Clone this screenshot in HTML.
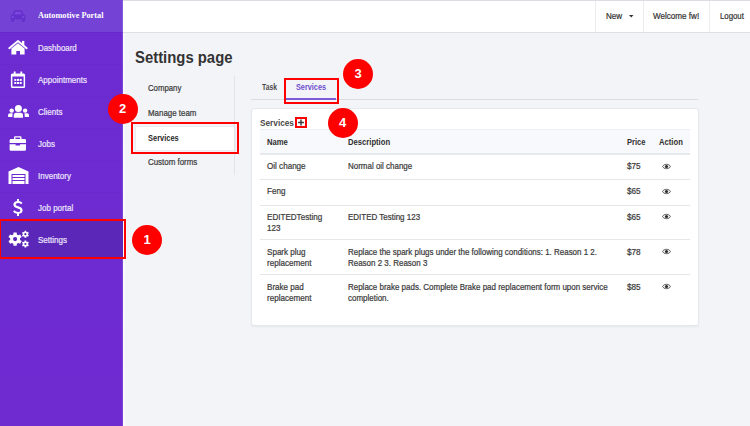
<!DOCTYPE html>
<html><head><meta charset="utf-8">
<style>
*{box-sizing:border-box;margin:0;padding:0}
html,body{width:750px;height:426px;overflow:hidden}
body{background:#f3f4f8;font-family:"Liberation Sans",sans-serif;color:#363636;position:relative}
.abs{position:absolute}
.tx{position:absolute;white-space:nowrap;transform-origin:0 0}
.red{position:absolute;border:2px solid #f00}
.circ{position:absolute;width:30px;height:30px;border-radius:50%;background:#fe0000}
.circ span{position:absolute;left:0;width:30px;top:8px;text-align:center;font-weight:bold;font-size:13px;line-height:14px;color:#fff}
.hl{position:absolute;left:260px;width:430px;height:1px;background:#e6e7eb}
</style></head><body>
<div class="abs" style="left:0;top:0;width:123px;height:426px;background:linear-gradient(#6b2cd1,#6f2ad0)"></div>
<div class="abs" style="left:0;top:0;width:123px;height:32px;background:#7443d6"></div>
<div class="abs" style="left:123px;top:32px;width:2px;height:394px;background:#f9f9fc"></div>
<div class="abs" style="left:0;top:32px;width:123px;height:1px;background:rgba(60,0,120,0.08)"></div>
<div class="abs" style="left:122px;top:0;width:1px;height:426px;background:rgba(255,255,255,0.12)"></div>
<svg class="abs" style="left:10px;top:10px" width="16" height="12" viewBox="0 0 16 12"><path d="M0.4 6.8 Q0.4 4.9 2.2 4.5 L3.8 1.2 Q4.3 0.3 5.3 0.3 H10.7 Q11.7 0.3 12.2 1.2 L13.8 4.5 Q15.6 4.9 15.6 6.8 V9.6 H0.4 Z" fill="#6431cc"/><rect x="1.2" y="9" width="2.8" height="3" rx="0.6" fill="#6431cc"/><rect x="12" y="9" width="2.8" height="3" rx="0.6" fill="#6431cc"/><path d="M4.3 4.3 L5.4 1.9 H10.6 L11.7 4.3 Z" fill="#7e48de"/><circle cx="2.7" cy="7.1" r="1.1" fill="#7e48de"/><circle cx="13.3" cy="7.1" r="1.1" fill="#7e48de"/></svg>
<div class="tx" style="left:38px;top:9.83px;font-size:8.8px;line-height:11.0px;font-weight:700;color:#fff;transform:scaleX(0.94);font-family:'Liberation Serif',serif;">Automotive Portal</div>
<div class="abs" style="left:0;top:64px;width:123px;height:1px;background:rgba(0,0,0,0.02)"></div>
<div class="abs" style="left:0;top:96px;width:123px;height:1px;background:rgba(0,0,0,0.02)"></div>
<div class="abs" style="left:0;top:128px;width:123px;height:1px;background:rgba(0,0,0,0.02)"></div>
<div class="abs" style="left:0;top:160px;width:123px;height:1px;background:rgba(0,0,0,0.02)"></div>
<div class="abs" style="left:0;top:192px;width:123px;height:1px;background:rgba(0,0,0,0.02)"></div>
<svg class="abs" style="left:8px;top:40px" width="20" height="15" viewBox="0 0 20 15"><path d="M1.3 8.2 L10 1.1 L18.7 8.2" fill="none" stroke="#fff" stroke-width="1.9" stroke-linecap="round" stroke-linejoin="round"/><rect x="14" y="0.9" width="2.3" height="4.6" fill="#fff"/><path d="M3.4 8.6 L10 3.3 L16.6 8.6 V14.6 H12 V11 H8.3 V14.6 H3.4 Z" fill="#fff"/></svg>
<div class="tx" style="left:38px;top:42.85px;font-size:8.8px;line-height:11.0px;font-weight:400;color:#ebe3fc;transform:scaleX(0.9);font-family:'Liberation Sans',sans-serif;-webkit-text-stroke:0.22px #ebe3fc;">Dashboard</div>
<svg class="abs" style="left:10px;top:71px" width="16" height="17" viewBox="0 0 16 17"><path d="M3.8 0.6 H5.6 V2.5 H10.4 V0.6 H12.2 V2.5 H13.6 Q15.1 2.5 15.1 4 V15.4 Q15.1 16.9 13.6 16.9 H2.4 Q0.9 16.9 0.9 15.4 V4 Q0.9 2.5 2.4 2.5 H3.8 Z M2.4 5.6 V15.4 H13.6 V5.6 Z" fill="#fff" fill-rule="evenodd"/><g fill="#fff"><rect x="4.3" y="7.9" width="2" height="2"/><rect x="7" y="7.9" width="2" height="2"/><rect x="9.7" y="7.9" width="2" height="2"/><rect x="4.3" y="11" width="2" height="2"/><rect x="7" y="11" width="2" height="2"/><rect x="9.7" y="11" width="2" height="2"/></g></svg>
<div class="tx" style="left:38px;top:74.75px;font-size:8.8px;line-height:11.0px;font-weight:400;color:#ebe3fc;transform:scaleX(0.91);font-family:'Liberation Sans',sans-serif;-webkit-text-stroke:0.22px #ebe3fc;">Appointments</div>
<svg class="abs" style="left:8px;top:104px" width="22" height="15" viewBox="0 0 22 15"><g fill="#fff"><circle cx="10.4" cy="4.5" r="3.5"/><circle cx="3.7" cy="6.6" r="2.2"/><circle cx="17.1" cy="6.6" r="2.2"/><path d="M5.8 13.8 V11.2 Q5.8 8.7 8.3 8.7 H12.5 Q15 8.7 15 11.2 V13.8 Z"/><path d="M0.1 13 V11.1 Q0.1 9.2 2 9.2 H4.7 Q4.3 10.4 4.4 13 Z"/><path d="M21 13 V11.1 Q21 9.2 19.1 9.2 H16.4 Q16.8 10.4 16.7 13 Z"/></g></svg>
<div class="tx" style="left:38px;top:106.65px;font-size:8.8px;line-height:11.0px;font-weight:400;color:#ebe3fc;transform:scaleX(0.91);font-family:'Liberation Sans',sans-serif;-webkit-text-stroke:0.22px #ebe3fc;">Clients</div>
<svg class="abs" style="left:9px;top:136px" width="18" height="15" viewBox="0 0 18 15"><path d="M6.2 0.2 H11.3 Q12.5 0.2 12.5 1.4 V3 H15.6 Q17 3 17 4.4 V7.1 H0.6 V4.4 Q0.6 3 2 3 H5 V1.4 Q5 0.2 6.2 0.2 Z M6.4 1.6 V3 H11.1 V1.6 Z" fill="#fff" fill-rule="evenodd"/><path d="M0.6 8.2 H6.6 V9.6 H11 V8.2 H17 V13.6 Q17 14.8 15.8 14.8 H1.8 Q0.6 14.8 0.6 13.6 Z" fill="#fff"/></svg>
<div class="tx" style="left:38px;top:138.65px;font-size:8.8px;line-height:11.0px;font-weight:400;color:#ebe3fc;transform:scaleX(0.91);font-family:'Liberation Sans',sans-serif;-webkit-text-stroke:0.22px #ebe3fc;">Jobs</div>
<svg class="abs" style="left:8px;top:167px" width="21" height="17" viewBox="0 0 21 17"><path d="M10.5 0 L20.5 4.5 V17 H17.5 V7 H3.5 V17 H0.5 V4.5 Z" fill="#fff"/><rect x="4.5" y="8" width="12" height="2" fill="#fff"/><rect x="4.5" y="11" width="12" height="2" fill="#fff"/><rect x="4.5" y="14" width="12" height="3" fill="#fff"/></svg>
<div class="tx" style="left:38px;top:170.65px;font-size:8.8px;line-height:11.0px;font-weight:400;color:#ebe3fc;transform:scaleX(0.91);font-family:'Liberation Sans',sans-serif;-webkit-text-stroke:0.22px #ebe3fc;">Inventory</div>
<svg class="abs" style="left:13.2px;top:199px" width="10" height="18" viewBox="0 0 10 18"><path d="M4 0 H6 V2 Q8.5 2.3 9.5 4 L8 5.2 Q7 3.9 5 3.9 Q2.6 3.9 2.6 5.4 Q2.6 6.6 5.2 7.2 Q9.6 8.2 9.6 11.3 Q9.6 14.3 6 14.8 V17 H4 V14.8 Q1.2 14.5 0 12.5 L1.6 11.3 Q2.7 12.9 5 12.9 Q7.4 12.9 7.4 11.4 Q7.4 10.1 4.6 9.4 Q0.4 8.5 0.4 5.6 Q0.4 2.6 4 2.1 Z" fill="#fff"/></svg>
<div class="tx" style="left:38px;top:202.65px;font-size:8.8px;line-height:11.0px;font-weight:400;color:#ebe3fc;transform:scaleX(0.91);font-family:'Liberation Sans',sans-serif;-webkit-text-stroke:0.22px #ebe3fc;">Job portal</div>
<div class="abs" style="left:0;top:221px;width:123px;height:36px;background:#5b27b9"></div>
<svg class="abs" style="left:0;top:225px" width="40" height="30" viewBox="0 0 40 30"><path fill="#fff" fill-rule="evenodd" d="M13.34 9.42 L13.52 7.38 L16.68 7.38 L16.86 9.42 L18.27 10.23 L20.13 9.38 L21.71 12.11 L20.03 13.29 L20.03 14.91 L21.71 16.09 L20.13 18.82 L18.27 17.97 L16.86 18.78 L16.68 20.82 L13.52 20.82 L13.34 18.78 L11.93 17.97 L10.07 18.82 L8.49 16.09 L10.17 14.91 L10.17 13.29 L8.49 12.11 L10.07 9.38 L11.93 10.23 Z M17.20 14.10 A2.1 2.1 0 1 0 13.00 14.10 A2.1 2.1 0 1 0 17.20 14.10 Z M24.48 6.77 L24.58 5.70 L26.22 5.70 L26.32 6.77 L27.05 7.19 L28.02 6.74 L28.85 8.16 L27.97 8.78 L27.97 9.62 L28.85 10.24 L28.02 11.66 L27.05 11.21 L26.32 11.63 L26.22 12.70 L24.58 12.70 L24.48 11.63 L23.75 11.21 L22.78 11.66 L21.95 10.24 L22.83 9.62 L22.83 8.78 L21.95 8.16 L22.78 6.74 L23.75 7.19 Z M26.50 9.20 A1.1 1.1 0 1 0 24.30 9.20 A1.1 1.1 0 1 0 26.50 9.20 Z M24.48 16.57 L24.58 15.50 L26.22 15.50 L26.32 16.57 L27.05 16.99 L28.02 16.54 L28.85 17.96 L27.97 18.58 L27.97 19.42 L28.85 20.04 L28.02 21.46 L27.05 21.01 L26.32 21.43 L26.22 22.50 L24.58 22.50 L24.48 21.43 L23.75 21.01 L22.78 21.46 L21.95 20.04 L22.83 19.42 L22.83 18.58 L21.95 17.96 L22.78 16.54 L23.75 16.99 Z M26.50 19.00 A1.1 1.1 0 1 0 24.30 19.00 A1.1 1.1 0 1 0 26.50 19.00 Z"/></svg>
<div class="tx" style="left:38px;top:234.65px;font-size:8.8px;line-height:11.0px;font-weight:400;color:#ebe3fc;transform:scaleX(0.91);font-family:'Liberation Sans',sans-serif;-webkit-text-stroke:0.22px #ebe3fc;">Settings</div>
<div class="red" style="left:0;top:219.3px;width:126px;height:40px;border-left-width:1.6px"></div>
<div class="abs" style="left:123px;top:0;width:627px;height:33px;background:#fff;border-top:1px solid #dcdde2;border-bottom:1px solid #dfe0e5"></div>
<div class="abs" style="left:595px;top:1px;width:1px;height:31px;background:#ececef"></div>
<div class="abs" style="left:643px;top:1px;width:1px;height:31px;background:#ececef"></div>
<div class="abs" style="left:709px;top:1px;width:1px;height:31px;background:#ececef"></div>
<div class="tx" style="left:605.5px;top:10.95px;font-size:8.8px;line-height:11.0px;font-weight:400;color:#333;transform:scaleX(0.915);font-family:'Liberation Sans',sans-serif;-webkit-text-stroke:0.22px #333;">New</div>
<svg class="abs" style="left:629.2px;top:15.2px" width="4.5" height="2.4" viewBox="0 0 4.5 2.4"><path d="M0 0 H4.5 L2.25 2.4 Z" fill="#333"/></svg>
<div class="tx" style="left:653px;top:10.95px;font-size:8.8px;line-height:11.0px;font-weight:400;color:#333;transform:scaleX(0.92);font-family:'Liberation Sans',sans-serif;-webkit-text-stroke:0.22px #333;">Welcome fw!</div>
<div class="tx" style="left:719.6px;top:10.95px;font-size:8.8px;line-height:11.0px;font-weight:400;color:#333;transform:scaleX(0.885);font-family:'Liberation Sans',sans-serif;-webkit-text-stroke:0.22px #333;">Logout</div>
<div class="tx" style="left:135.3px;top:47.10px;font-size:17.4px;line-height:21.75px;font-weight:700;color:#333;transform:scaleX(0.855);font-family:'Liberation Sans',sans-serif;">Settings page</div>
<div class="tx" style="left:147.7px;top:83.05px;font-size:8.8px;line-height:11.0px;font-weight:400;color:#3a3a3a;transform:scaleX(0.885);font-family:'Liberation Sans',sans-serif;-webkit-text-stroke:0.22px #3a3a3a;">Company</div>
<div class="tx" style="left:147.7px;top:107.75px;font-size:8.8px;line-height:11.0px;font-weight:400;color:#3a3a3a;transform:scaleX(0.9);font-family:'Liberation Sans',sans-serif;-webkit-text-stroke:0.22px #3a3a3a;">Manage team</div>
<div class="abs" style="left:135px;top:125.5px;width:101px;height:25px;background:#fff;border:1px solid #ececf0"></div>
<div class="tx" style="left:147.7px;top:132.65px;font-size:8.8px;line-height:11.0px;font-weight:700;color:#2a2a2a;transform:scaleX(0.85);font-family:'Liberation Sans',sans-serif;">Services</div>
<div class="tx" style="left:147.7px;top:157.35px;font-size:8.8px;line-height:11.0px;font-weight:400;color:#3a3a3a;transform:scaleX(0.9);font-family:'Liberation Sans',sans-serif;-webkit-text-stroke:0.22px #3a3a3a;">Custom forms</div>
<div class="abs" style="left:234px;top:76px;width:1px;height:99px;background:#e3e4e8"></div>
<div class="red" style="left:131px;top:122px;width:108px;height:32px"></div>
<div class="abs" style="left:251px;top:98.5px;width:447px;height:1.2px;background:#dcdde1"></div>
<div class="tx" style="left:261.5px;top:81.75px;font-size:8.8px;line-height:11.0px;font-weight:700;color:#4a4a4a;transform:scaleX(0.77);font-family:'Liberation Sans',sans-serif;">Task</div>
<div class="tx" style="left:295.8px;top:81.75px;font-size:8.8px;line-height:11.0px;font-weight:700;color:#6f50cc;transform:scaleX(0.83);font-family:'Liberation Sans',sans-serif;">Services</div>
<div class="abs" style="left:286px;top:98px;width:50px;height:2px;background:#7b5bd6"></div>
<div class="red" style="left:284px;top:78px;width:55px;height:26px"></div>
<div class="abs" style="left:251px;top:108px;width:447.5px;height:218px;background:#fff;border:1px solid #e6e8ed;border-radius:3px;box-shadow:0 1px 2px rgba(0,0,0,0.06)"></div>
<div class="tx" style="left:260.2px;top:117.07px;font-size:9.4px;line-height:11.75px;font-weight:700;color:#4a4a4a;transform:scaleX(0.88);font-family:'Liberation Sans',sans-serif;">Services</div>
<svg class="abs" style="left:295px;top:117px" width="12" height="11" viewBox="0 0 12 11"><rect x="1" y="1" width="10" height="9" fill="none" stroke="#f00" stroke-width="2"/><path d="M6 2.6 V8.4 M3.1 5.5 H8.9" stroke="#3a3a3a" stroke-width="1.45"/></svg>
<div class="abs" style="left:260px;top:129px;width:430px;height:25.5px;background:#f8f9fc;border-top:1px solid #eceef2;border-bottom:2px solid #e6e8ec"></div>
<div class="tx" style="left:266.5px;top:136.65px;font-size:8.8px;line-height:11.0px;font-weight:700;color:#2f2f2f;transform:scaleX(0.87);font-family:'Liberation Sans',sans-serif;">Name</div>
<div class="tx" style="left:348.2px;top:136.65px;font-size:8.8px;line-height:11.0px;font-weight:700;color:#2f2f2f;transform:scaleX(0.87);font-family:'Liberation Sans',sans-serif;">Description</div>
<div class="tx" style="left:627.2px;top:136.65px;font-size:8.8px;line-height:11.0px;font-weight:700;color:#2f2f2f;transform:scaleX(0.855);font-family:'Liberation Sans',sans-serif;">Price</div>
<div class="tx" style="left:659.2px;top:136.65px;font-size:8.8px;line-height:11.0px;font-weight:700;color:#2f2f2f;transform:scaleX(0.87);font-family:'Liberation Sans',sans-serif;">Action</div>
<div class="hl" style="top:179px"></div>
<div class="hl" style="top:204.5px"></div>
<div class="hl" style="top:239.3px"></div>
<div class="hl" style="top:274.2px"></div>
<div class="tx" style="left:266.5px;top:161.25px;font-size:8.8px;line-height:11.2px;font-weight:400;color:#3a3a3a;transform:scaleX(0.918);font-family:'Liberation Sans',sans-serif;-webkit-text-stroke:0.22px #3a3a3a;">Oil change</div>
<div class="tx" style="left:348.2px;top:161.25px;font-size:8.8px;line-height:11.2px;font-weight:400;color:#3a3a3a;transform:scaleX(0.906);font-family:'Liberation Sans',sans-serif;-webkit-text-stroke:0.22px #3a3a3a;">Normal oil change</div>
<div class="tx" style="left:627.2px;top:161.25px;font-size:8.8px;line-height:11.2px;font-weight:400;color:#3a3a3a;transform:scaleX(0.93);font-family:'Liberation Sans',sans-serif;-webkit-text-stroke:0.22px #3a3a3a;">$75</div>
<div class="tx" style="left:266.5px;top:186.25px;font-size:8.8px;line-height:11.2px;font-weight:400;color:#3a3a3a;transform:scaleX(0.918);font-family:'Liberation Sans',sans-serif;-webkit-text-stroke:0.22px #3a3a3a;">Feng</div>
<div class="tx" style="left:627.2px;top:186.25px;font-size:8.8px;line-height:11.2px;font-weight:400;color:#3a3a3a;transform:scaleX(0.93);font-family:'Liberation Sans',sans-serif;-webkit-text-stroke:0.22px #3a3a3a;">$65</div>
<div class="tx" style="left:266.5px;top:211.75px;font-size:8.8px;line-height:11.2px;font-weight:400;color:#3a3a3a;transform:scaleX(0.918);font-family:'Liberation Sans',sans-serif;-webkit-text-stroke:0.22px #3a3a3a;">EDITEDTesting<br>123</div>
<div class="tx" style="left:348.2px;top:211.75px;font-size:8.8px;line-height:11.2px;font-weight:400;color:#3a3a3a;transform:scaleX(0.906);font-family:'Liberation Sans',sans-serif;-webkit-text-stroke:0.22px #3a3a3a;">EDITED Testing 123</div>
<div class="tx" style="left:627.2px;top:211.75px;font-size:8.8px;line-height:11.2px;font-weight:400;color:#3a3a3a;transform:scaleX(0.93);font-family:'Liberation Sans',sans-serif;-webkit-text-stroke:0.22px #3a3a3a;">$65</div>
<div class="tx" style="left:266.5px;top:246.95px;font-size:8.8px;line-height:11.2px;font-weight:400;color:#3a3a3a;transform:scaleX(0.918);font-family:'Liberation Sans',sans-serif;-webkit-text-stroke:0.22px #3a3a3a;">Spark plug<br>replacement</div>
<div class="tx" style="left:348.2px;top:246.95px;font-size:8.8px;line-height:11.2px;font-weight:400;color:#3a3a3a;transform:scaleX(0.906);font-family:'Liberation Sans',sans-serif;-webkit-text-stroke:0.22px #3a3a3a;">Replace the spark plugs under the following conditions: 1. Reason 1 2.<br>Reason 2 3. Reason 3</div>
<div class="tx" style="left:627.2px;top:246.95px;font-size:8.8px;line-height:11.2px;font-weight:400;color:#3a3a3a;transform:scaleX(0.93);font-family:'Liberation Sans',sans-serif;-webkit-text-stroke:0.22px #3a3a3a;">$78</div>
<div class="tx" style="left:266.5px;top:281.75px;font-size:8.8px;line-height:11.2px;font-weight:400;color:#3a3a3a;transform:scaleX(0.918);font-family:'Liberation Sans',sans-serif;-webkit-text-stroke:0.22px #3a3a3a;">Brake pad<br>replacement</div>
<div class="tx" style="left:348.2px;top:281.75px;font-size:8.8px;line-height:11.2px;font-weight:400;color:#3a3a3a;transform:scaleX(0.906);font-family:'Liberation Sans',sans-serif;-webkit-text-stroke:0.22px #3a3a3a;">Replace brake pads. Complete Brake pad replacement form upon service<br>completion.</div>
<div class="tx" style="left:627.2px;top:281.75px;font-size:8.8px;line-height:11.2px;font-weight:400;color:#3a3a3a;transform:scaleX(0.93);font-family:'Liberation Sans',sans-serif;-webkit-text-stroke:0.22px #3a3a3a;">$85</div>
<svg class="abs" style="left:661.5px;top:162.7px" width="9" height="7" viewBox="0 0 9 7"><path d="M0.6 3.5 C1.8 0.6 7.2 0.6 8.4 3.5 C7.2 6.4 1.8 6.4 0.6 3.5 Z" fill="#fff" stroke="#4a4a4a" stroke-width="0.95"/><circle cx="4.5" cy="3.5" r="1.6" fill="#2a2a2a"/></svg>
<svg class="abs" style="left:661.5px;top:187.7px" width="9" height="7" viewBox="0 0 9 7"><path d="M0.6 3.5 C1.8 0.6 7.2 0.6 8.4 3.5 C7.2 6.4 1.8 6.4 0.6 3.5 Z" fill="#fff" stroke="#4a4a4a" stroke-width="0.95"/><circle cx="4.5" cy="3.5" r="1.6" fill="#2a2a2a"/></svg>
<svg class="abs" style="left:661.5px;top:213.2px" width="9" height="7" viewBox="0 0 9 7"><path d="M0.6 3.5 C1.8 0.6 7.2 0.6 8.4 3.5 C7.2 6.4 1.8 6.4 0.6 3.5 Z" fill="#fff" stroke="#4a4a4a" stroke-width="0.95"/><circle cx="4.5" cy="3.5" r="1.6" fill="#2a2a2a"/></svg>
<svg class="abs" style="left:661.5px;top:248.4px" width="9" height="7" viewBox="0 0 9 7"><path d="M0.6 3.5 C1.8 0.6 7.2 0.6 8.4 3.5 C7.2 6.4 1.8 6.4 0.6 3.5 Z" fill="#fff" stroke="#4a4a4a" stroke-width="0.95"/><circle cx="4.5" cy="3.5" r="1.6" fill="#2a2a2a"/></svg>
<svg class="abs" style="left:661.5px;top:283.2px" width="9" height="7" viewBox="0 0 9 7"><path d="M0.6 3.5 C1.8 0.6 7.2 0.6 8.4 3.5 C7.2 6.4 1.8 6.4 0.6 3.5 Z" fill="#fff" stroke="#4a4a4a" stroke-width="0.95"/><circle cx="4.5" cy="3.5" r="1.6" fill="#2a2a2a"/></svg>
<div class="circ" style="left:132px;top:224.7px"><span>1</span></div>
<div class="circ" style="left:107.5px;top:93.6px"><span>2</span></div>
<div class="circ" style="left:343px;top:58.6px"><span>3</span></div>
<div class="circ" style="left:327.5px;top:107.8px"><span>4</span></div>
</body></html>
